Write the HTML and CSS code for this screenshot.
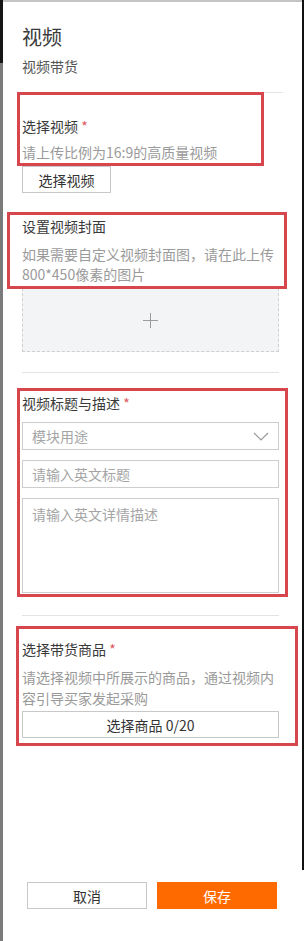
FILE: index.html
```html
<!DOCTYPE html>
<html lang="zh-CN">
<head>
    <meta charset="UTF-8">
    <meta name="viewport" content="width=device-width, initial-scale=1.0">
    <title>视频</title>
    <link rel="stylesheet" href="styles.css">
</head>
<body>
    <div class="frame">
        <div class="edge-left"></div>
        <div class="panel">
            <div class="head">
                <div class="title">视频</div>
                <div class="sub">视频带货</div>
            </div>
            <div class="line first"></div>

            <div class="sec sec-video">
                <div class="label">选择视频 <span class="req">*</span></div>
                <div class="desc">请上传比例为16:9的高质量视频</div>
                <button class="btn btn-small">选择视频</button>
            </div>

            <div class="sec sec-cover">
                <div class="label">设置视频封面</div>
                <div class="desc">如果需要自定义视频封面图，请在此上传800*450像素的图片</div>
                <div class="upload"><span class="plus"></span></div>
            </div>
            <div class="line"></div>

            <div class="sec sec-text">
                <div class="label">视频标题与描述 <span class="req">*</span></div>
                <div class="field select">
                    <span>模块用途</span>
                    <svg width="16" height="9" viewBox="0 0 16 9"><path d="M1 1 L8 8 L15 1" fill="none" stroke="#999" stroke-width="1.2"/></svg>
                </div>
                <div class="field">请输入英文标题</div>
                <div class="field area">请输入英文详情描述</div>
            </div>
            <div class="line"></div>

            <div class="sec sec-goods">
                <div class="label">选择带货商品 <span class="req">*</span></div>
                <div class="desc tight">请选择视频中所展示的商品，通过视频内容引导买家发起采购</div>
                <button class="btn btn-wide">选择商品 0/20</button>
            </div>

            <div class="foot">
                <button class="btn btn-foot">取消</button>
                <button class="btn btn-foot btn-save">保存</button>
            </div>

            <!-- annotation boxes drawn on top of the form -->
            <div class="mark mark-1"></div>
            <div class="mark mark-2"></div>
            <div class="mark mark-3"></div>
            <div class="mark mark-4"></div>
        </div>
        <div class="edge-right"></div>
    </div>
</body>
</html>
```

FILE: styles.css
```css
* {
    box-sizing: border-box;
}

body {
    margin: 0;
    font-family: "Noto Sans CJK SC", "Noto Sans", sans-serif;
    color: #333;
}

.frame {
    display: flex;
    height: 941px;
}

.edge-left {
    width: 3px;
    background: linear-gradient(#151515 0, #151515 63px, #7a7a7a 63px);
}

.edge-right {
    width: 2px;
    background: linear-gradient(#111 0, #111 870px, #fff 870px);
}

.panel {
    position: relative;
    flex: 1;
    display: flex;
    flex-direction: column;
    padding: 0 23px 32px 19px;
    background: #fff;
    border-top: 2px solid #c4c4c4;
}

.head {
    padding-top: 21px;
}

.title {
    font-size: 20px;
    line-height: 28px;
    color: #3a3a3a;
}

.sub {
    margin-top: 5px;
    font-size: 14px;
    line-height: 20px;
    color: #555;
}

.line {
    height: 1px;
    background: #e3e3e3;
    margin-top: 20px;
}

.line.first {
    margin: 16px -4px 0 -4px;
}

.sec {
    margin-top: 23px;
}

.label {
    font-size: 14px;
    line-height: 20px;
    color: #3a3a3a;
}

.req {
    color: #e0585e;
}

.desc {
    margin-top: 6px;
    font-size: 14px;
    line-height: 20px;
    color: #9a9a9a;
}

.desc.tight {
    line-height: 21px;
}

.btn {
    font-family: inherit;
    font-size: 14px;
    color: #333;
    background: #fff;
    border: 1px solid #c8c8c8;
    padding: 0;
    height: 27px;
}

.btn-small {
    display: block;
    margin-top: 4px;
    width: 89px;
}

.btn-wide {
    display: block;
    margin-top: 2px;
    width: 100%;
}

.sec-cover {
    margin-top: 23px;
}

.sec-cover .desc {
    margin-top: 8px;
}

.upload {
    margin-top: 4px;
    height: 64px;
    background: #f3f4f6;
    border: 1px dashed #cfcfcf;
    display: flex;
    align-items: center;
    justify-content: center;
}

.plus {
    position: relative;
    width: 15px;
    height: 15px;
}

.plus::before,
.plus::after {
    content: "";
    position: absolute;
    background: #9c9c9c;
}

.plus::before {
    left: 7px;
    top: 0;
    width: 1px;
    height: 15px;
}

.plus::after {
    left: 0;
    top: 7px;
    width: 15px;
    height: 1px;
}

.sec-text {
    margin-top: 20px;
}

.field {
    display: flex;
    align-items: center;
    justify-content: space-between;
    height: 28px;
    margin-top: 10px;
    padding: 0 9px;
    border: 1px solid #cdcdcd;
    font-size: 14px;
    color: #a5a5a5;
}

.field.select {
    margin-top: 9px;
}

.field.area {
    height: 95px;
    align-items: flex-start;
    padding-top: 5px;
}

.sec-text + .line {
    margin-top: 22px;
}

.sec-goods {
    margin-top: 23px;
}

.sec-goods .desc {
    margin-top: 8px;
}

.foot {
    margin-top: auto;
    margin-left: 5px;
    display: flex;
    gap: 10px;
}

.btn-foot {
    width: 120px;
    height: 27px;
}

.btn-save {
    background: #ff6a00;
    border-color: #ff6a00;
    color: #fff;
}

.mark {
    position: absolute;
    border: 3px solid #d7464d;
}

.mark-1 {
    left: 14px;
    top: 90px;
    width: 247px;
    height: 74px;
}

.mark-2 {
    left: 4px;
    top: 210px;
    width: 280px;
    height: 77px;
}

.mark-3 {
    left: 14px;
    top: 386px;
    width: 271px;
    height: 209px;
}

.mark-4 {
    left: 13px;
    top: 624px;
    width: 282px;
    height: 120px;
}
```
